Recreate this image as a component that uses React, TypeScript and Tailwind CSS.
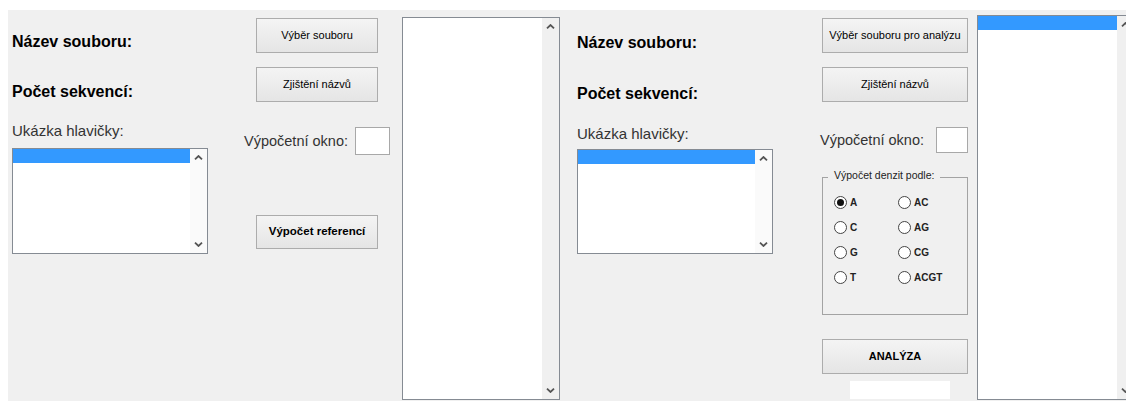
import React from "react";

function Chevron({ up }: { up?: boolean }) {
  return (
    <svg width="9" height="5" viewBox="0 0 9 5" className="block">
      <polyline
        points={up ? "1,4.3 4.5,1 8,4.3" : "1,0.7 4.5,4 8,0.7"}
        fill="none"
        stroke="#555"
        strokeWidth="1.8"
      />
    </svg>
  );
}

function ListBox({
  className,
  selected,
  track,
}: {
  className: string;
  selected?: boolean;
  track: string;
}) {
  return (
    <div className={`flex shrink-0 border border-[#858b93] bg-white ${className}`}>
      <div className="min-w-0 flex-1">
        {selected && <div className="h-[14px] bg-[#3399ff]" />}
      </div>
      <div className={`flex w-[17px] flex-col items-center justify-between pt-[6px] pb-[6px] ${track}`}>
        <Chevron up />
        <Chevron />
      </div>
    </div>
  );
}

function Btn({ children, className }: { children: React.ReactNode; className: string }) {
  return (
    <button
      type="button"
      className={`flex shrink-0 items-center justify-center border border-[#acacac] bg-linear-to-b from-[#f4f4f4] to-[#e5e5e5] text-black ${className}`}
    >
      {children}
    </button>
  );
}

function Radio({ label, checked }: { label: string; checked?: boolean }) {
  return (
    <div className="flex h-[25px] items-center gap-[3px]">
      <span className="flex h-[13px] w-[13px] items-center justify-center rounded-full border border-[#444] bg-white">
        {checked && <span className="h-[7px] w-[7px] rounded-full bg-[#111]" />}
      </span>
      <span className="text-[10px] leading-[12px] font-bold text-[#222]">{label}</span>
    </div>
  );
}

export default function App() {
  return (
    <div className="h-[401px] w-[1126px] overflow-hidden bg-white pt-[10px] pl-[8px] font-['Liberation_Sans',Arial,sans-serif]">
      <div className="flex h-[391px] items-start overflow-hidden bg-[#f0f0f0]">
        {/* reference file: labels + header preview */}
        <div className="ml-[4px] flex w-[196px] shrink-0 flex-col">
          <div className="mt-[22px] h-[19px] text-[16px] leading-[19px] font-bold text-black">Název souboru:</div>
          <div className="mt-[31px] h-[19px] text-[16px] leading-[19px] font-bold text-black">Počet sekvencí:</div>
          <div className="mt-[21px] h-[18px] text-[15px] leading-[18px] text-[#333]">Ukázka hlavičky:</div>
          <ListBox className="mt-[8px] h-[106px] w-[196px]" selected track="bg-[#fafafa]" />
        </div>

        {/* reference file: actions */}
        <div className="ml-[36px] flex w-[146px] shrink-0 flex-col">
          <Btn className="mt-[8px] ml-[12px] h-[35px] w-[122px] text-[11px]">Výběr souboru</Btn>
          <Btn className="mt-[14px] ml-[12px] h-[35px] w-[122px] text-[11px]">Zjištění názvů</Btn>
          <div className="mt-[25px] flex h-[28px] items-center">
            <span className="text-[14.5px] leading-[17px] text-[#333]">Výpočetní okno:</span>
            <div className="ml-auto h-[28px] w-[35px] border border-[#a8a8a8] bg-white" />
          </div>
          <Btn className="mt-[60px] ml-[12px] h-[34px] w-[122px] text-[11.5px] font-bold">Výpočet referencí</Btn>
        </div>

        {/* reference output */}
        <ListBox className="mt-[7px] ml-[12px] h-[383px] w-[158px]" track="bg-[#f0f0f0]" />

        {/* analysed file: labels + header preview */}
        <div className="ml-[17px] flex w-[196px] shrink-0 flex-col">
          <div className="mt-[23px] h-[19px] text-[16px] leading-[19px] font-bold text-black">Název souboru:</div>
          <div className="mt-[32px] h-[19px] text-[16px] leading-[19px] font-bold text-black">Počet sekvencí:</div>
          <div className="mt-[22px] h-[18px] text-[15px] leading-[18px] text-[#333]">Ukázka hlavičky:</div>
          <ListBox className="mt-[6px] h-[105px] w-[196px]" selected track="bg-[#fafafa]" />
        </div>

        {/* analysed file: actions + density options */}
        <div className="ml-[47px] flex w-[148px] shrink-0 flex-col">
          <Btn className="mt-[8px] ml-[2px] h-[35px] w-[146px] text-[11px]">Výběr souboru pro analýzu</Btn>
          <Btn className="mt-[14px] ml-[2px] h-[35px] w-[146px] text-[11px]">Zjištění názvů</Btn>
          <div className="mt-[25px] flex h-[26px] items-center">
            <span className="text-[14.5px] leading-[17px] text-[#333]">Výpočetní okno:</span>
            <div className="ml-auto h-[26px] w-[32px] border border-[#a8a8a8] bg-white" />
          </div>
          <div className="relative mt-[24px] ml-[2px] h-[138px] w-[146px] border border-[#a3a3a3]">
            <span className="absolute top-[-9px] left-[5px] bg-[#f0f0f0] px-[6px] text-[10.5px] leading-[13px] text-[#222]">
              Výpočet denzit podle:
            </span>
            <div className="grid grid-cols-[64px_auto] pt-[12px] pl-[11px]">
              <Radio label="A" checked />
              <Radio label="AC" />
              <Radio label="C" />
              <Radio label="AG" />
              <Radio label="G" />
              <Radio label="CG" />
              <Radio label="T" />
              <Radio label="ACGT" />
            </div>
          </div>
          <Btn className="mt-[24px] ml-[2px] h-[35px] w-[146px] text-[11px] font-bold">ANALÝZA</Btn>
          <div className="mt-[7px] ml-[30px] h-[18px] w-[100px] bg-white" />
        </div>

        {/* analysis output */}
        <ListBox className="mt-[5px] ml-[9px] h-[385px] w-[158px]" selected track="bg-[#f0f0f0]" />
      </div>
    </div>
  );
}
